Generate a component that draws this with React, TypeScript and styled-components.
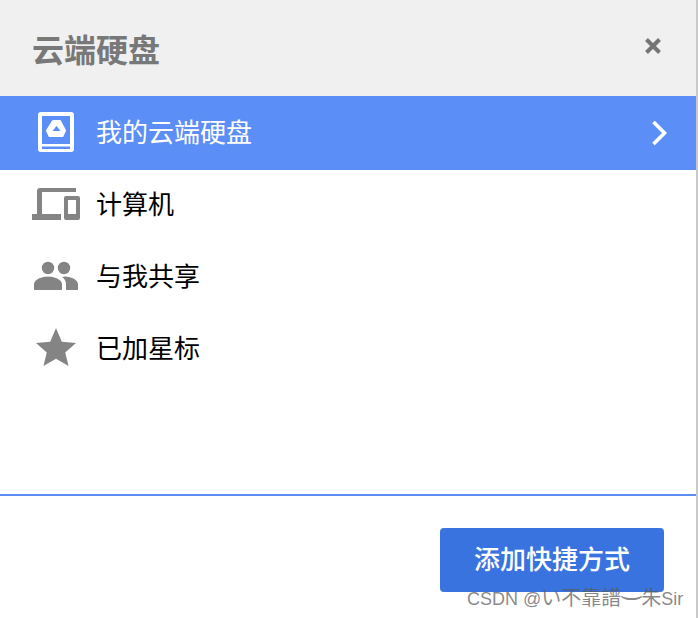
import React from "react";
import styled, { createGlobalStyle } from "styled-components";

const Global = createGlobalStyle`
  html, body { margin: 0; padding: 0; background: #fff; }
  body { font-family: "Liberation Sans", "Noto Sans CJK SC", sans-serif; }
`;

const Dialog = styled.div`
  position: relative;
  width: 696px;
  height: 618px;
  border-right: 2px solid #c9c9c9;
  display: flex;
  flex-direction: column;
  background: #fff;
  overflow: hidden;
`;

const Header = styled.header`
  height: 96px;
  flex: none;
  background: #f0f0f0;
  display: flex;
  align-items: center;
  justify-content: space-between;
  padding: 0 33px 0 33px;
  box-sizing: border-box;
`;

const Title = styled.h1`
  margin: 0;
  font-size: 32px;
  font-weight: 700;
  line-height: 40px;
  color: #787878;
  margin-left: -1px;
  font-family: "Noto Sans CJK SC", sans-serif;
`;

const CloseButton = styled.button`
  border: 0;
  padding: 0;
  background: none;
  width: 20px;
  height: 20px;
  display: flex;
  margin-bottom: 4px;
`;

const List = styled.div`
  height: 398px;
  flex: none;
  display: flex;
  flex-direction: column;
`;

const Row = styled.div<{ $active?: boolean }>`
  height: ${(p) => (p.$active ? 74 : 72)}px;
  flex: none;
  display: flex;
  align-items: center;
  box-sizing: border-box;
  padding: ${(p) => (p.$active ? "0 27px 0 32px" : "0 27px 2px 32px")};
  background: ${(p) => (p.$active ? "#5b8ef6" : "transparent")};
  color: ${(p) => (p.$active ? "#fff" : "#000")};
`;

const IconSlot = styled.span`
  width: 48px;
  height: 48px;
  flex: none;
  display: flex;
  margin-right: 17px;
`;

const Label = styled.span`
  flex: 1;
  font-size: 26px;
  line-height: 32px;
  margin-bottom: 4px;
  margin-left: -1px;
  font-family: "Noto Sans CJK SC", sans-serif;
`;

const Footer = styled.footer`
  flex: 1;
  border-top: 2px solid #5b8ef0;
  display: flex;
  justify-content: flex-end;
  align-items: flex-start;
  padding: 32px 32px 0 0;
`;

const Primary = styled.button`
  width: 224px;
  height: 64px;
  border: 0;
  border-radius: 4px;
  background: #3873e0;
  color: #fff;
  font-size: 26px;
  font-weight: 500;
  padding: 0 0 6px 0;
  font-family: "Noto Sans CJK SC", sans-serif;
`;

const Watermark = styled.span`
  position: absolute;
  left: 467px;
  top: 585px;
  font-size: 18px;
  line-height: 26px;
  color: rgba(90, 90, 90, 0.72);
  white-space: nowrap;
  font-family: "Liberation Sans", "Noto Sans CJK SC", sans-serif;
`;

const WatermarkCjk = styled.span`
  font-size: 20px;
`;

const WatermarkArc = styled.span`
  display: inline-block;
  width: 20px;
  text-align: center;
  font-family: "DejaVu Sans", sans-serif;
  transform: translateY(-2px) scale(1.9, 1.3);
`;

const Drive = () => (
  <svg width="48" height="48" viewBox="0 0 48 48">
    <path
      fill="#fff"
      fillRule="evenodd"
      d="M9 3h30a3 3 0 0 1 3 3v34a3 3 0 0 1-3 3H9a3 3 0 0 1-3-3V6a3 3 0 0 1 3-3zM10 7v28h28V7zM10 37.500v2.500h28v-2.500z"
    />
    <path
      fill="#fff"
      stroke="#fff"
      strokeWidth="2"
      strokeLinejoin="round"
      d="M21 12h7l5 9.500-2.500 5.500h-13l-2.500-5.500z"
    />
    <path fill="#5b8ef6" d="M24.500 17l4 5h-8z" />
  </svg>
);

const Devices = () => (
  <svg width="48" height="48" viewBox="0 0 48 48" fill="#848484">
    <path d="M8 7h36v4H10v22h19v6H0v-6h5V10a3 3 0 0 1 3-3z" />
    <path
      fillRule="evenodd"
      d="M34 15h12a2 2 0 0 1 2 2v20a2 2 0 0 1-2 2H34a2 2 0 0 1-2-2V17a2 2 0 0 1 2-2zM36 19v14h8V19z"
    />
  </svg>
);

const People = () => (
  <svg width="48" height="48" viewBox="0 0 48 48" fill="#848484">
    <circle cx="16" cy="15" r="6.200" />
    <circle cx="32" cy="15" r="6.200" />
    <path d="M2 37v-6c0-4.500 8-7.500 14-7.500s14 3 14 7.500v6z" />
    <path d="M34 37v-6c0-3-1.500-5.500-4-7 1-.3 2-.5 3-.5 5 0 13 3 13 7.500v6z" />
  </svg>
);

const Star = () => (
  <svg width="48" height="48" viewBox="0 0 48 48" fill="#848484">
    <path d="M24 3l5.800 13.800 14.200 1.300-10.800 9.400 3.300 13.500L24 33.800 11.500 41l3.300-13.500L4 18.100l14.200-1.300z" />
  </svg>
);

export default function App() {
  return (
    <Dialog>
      <Global />
      <Header>
        <Title>云端硬盘</Title>
        <CloseButton aria-label="关闭">
          <svg width="20" height="20" viewBox="0 0 20 20">
            <path d="M3.500 3.500l13 13M16.500 3.500l-13 13" stroke="#757575" strokeWidth="4" />
          </svg>
        </CloseButton>
      </Header>
      <List>
        <Row $active>
          <IconSlot>
            <Drive />
          </IconSlot>
          <Label>我的云端硬盘</Label>
          <svg width="18" height="26" viewBox="0 0 18 26">
            <path d="M2.500 2l11 11-11 11" fill="none" stroke="#fff" strokeWidth="3.600" />
          </svg>
        </Row>
        <Row>
          <IconSlot>
            <Devices />
          </IconSlot>
          <Label>计算机</Label>
        </Row>
        <Row>
          <IconSlot>
            <People />
          </IconSlot>
          <Label>与我共享</Label>
        </Row>
        <Row>
          <IconSlot>
            <Star />
          </IconSlot>
          <Label>已加星标</Label>
        </Row>
      </List>
      <Footer>
        <Primary>添加快捷方式</Primary>
      </Footer>
      <Watermark>
        CSDN @<WatermarkCjk>い不靠譜<WatermarkArc>⌣</WatermarkArc>朱</WatermarkCjk>Sir
      </Watermark>
    </Dialog>
  );
}
